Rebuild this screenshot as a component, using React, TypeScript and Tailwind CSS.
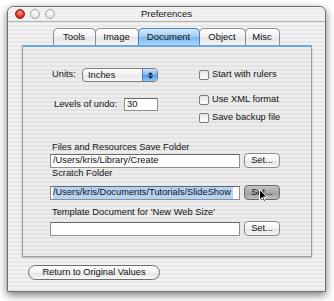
const stripes =
  'bg-[repeating-linear-gradient(180deg,#f3f3f3_0px,#f3f3f3_2px,#e7e7e7_2px,#e7e7e7_4px)]'

function Tab({ label, width, active }: { label: string; width: string; active?: boolean }) {
  return (
    <div
      className={`${width} h-[17px] -ml-px first:ml-0 flex items-center justify-center rounded-t-[5px] border border-b-0 ${
        active
          ? 'border-[#4a7fbf] bg-[linear-gradient(180deg,#d8ecfd_0%,#9ccbf3_50%,#7ab8ee_51%,#a9d6fb_100%)] z-10'
          : 'border-[#8c8c8c] bg-[linear-gradient(180deg,#ffffff_0%,#f1f1f1_50%,#e4e4e4_51%,#f4f4f4_100%)]'
      }`}
    >
      {label}
    </div>
  )
}

function Checkbox({ label }: { label: string }) {
  return (
    <div className="flex items-center h-[14px]">
      <div className="w-[10px] h-[10px] rounded-[2px] border border-[#7d7d7d] bg-[linear-gradient(180deg,#e6e6e6,#ffffff)] mr-[3px]" />
      <span>{label}</span>
    </div>
  )
}

function SetButton({ pressed }: { pressed?: boolean }) {
  return (
    <div
      className={`relative w-[36px] h-[15px] rounded-[4px] border flex items-center justify-center ${
        pressed
          ? 'border-[#6a6a6a] bg-[linear-gradient(180deg,#c4c4c4_0%,#a9a9a9_50%,#9c9c9c_51%,#bdbdbd_100%)]'
          : 'border-[#8a8a8a] bg-[linear-gradient(180deg,#ffffff_0%,#f2f2f2_50%,#e2e2e2_51%,#f6f6f6_100%)]'
      }`}
    >
      Set...
      {pressed && (
        <svg className="absolute left-[14px] top-[3px]" width="9" height="14" viewBox="0 0 9 14">
          <path d="M0.5 0.5 L0.5 11 L3 8.5 L5 13 L6.5 12.3 L4.6 8 L8 8 Z" fill="#000" stroke="#fff" strokeWidth="1" />
        </svg>
      )}
    </div>
  )
}

function TextField({ children, selected }: { children?: React.ReactNode; selected?: boolean }) {
  return (
    <div className="w-[190px] h-[14px] border border-[#8e8e8e] border-t-[#6a6a6a] bg-white overflow-hidden flex items-center px-[2px] whitespace-nowrap">
      {selected ? <span className="bg-[#b6d3f5] pr-[2px]">{children}</span> : children}
    </div>
  )
}

export default function App() {
  return (
    <div
      className="w-[334px] h-[301px] bg-white pt-[6px] pl-[7px] text-[9.3px] text-[#111]"
      style={{ fontFamily: '"Liberation Sans", Arial, sans-serif' }}
    >
      <div className={`w-[319px] h-[286px] border border-[#6f6f6f] rounded-t-[6px] shadow-[0_3px_8px_rgba(0,0,0,0.55)] flex flex-col ${stripes}`}>
        {/* Title bar */}
        <div className="relative h-[15px] flex items-center justify-center border-b border-[#b4b4b4] bg-[repeating-linear-gradient(180deg,#f7f7f7_0px,#f7f7f7_1px,#e9e9e9_1px,#e9e9e9_2px)] rounded-t-[6px]">
          <div className="absolute left-[7px] top-[2px] flex gap-[5px]">
            <div className="w-[10px] h-[10px] rounded-full border border-[#8b1a12] bg-[radial-gradient(circle_at_50%_35%,#ff9d8c_0%,#e0392a_55%,#a5170c_100%)]" />
            <div className="w-[10px] h-[10px] rounded-full border border-[#a8a8a8] bg-[radial-gradient(circle_at_50%_35%,#ffffff_0%,#e6e6e6_60%,#c9c9c9_100%)]" />
            <div className="w-[10px] h-[10px] rounded-full border border-[#a8a8a8] bg-[radial-gradient(circle_at_50%_35%,#ffffff_0%,#e6e6e6_60%,#c9c9c9_100%)]" />
          </div>
          <span className="text-[9.5px]">Preferences</span>
        </div>

        {/* Tabs */}
        <div className="flex justify-center mt-[6px] ml-[-1px] text-[9.5px]">
          <Tab label="Tools" width="w-[43px]" />
          <Tab label="Image" width="w-[44px]" />
          <Tab label="Document" width="w-[62px]" active />
          <Tab label="Object" width="w-[47px]" />
          <Tab label="Misc" width="w-[35px]" />
        </div>

        {/* Panel */}
        <div className="ml-[14px] w-[290px] h-[212px] border border-[#9a9a9a] border-t-2 border-t-[#6aa8e8] bg-[repeating-linear-gradient(180deg,#ededed_0px,#ededed_2px,#e3e3e3_2px,#e3e3e3_4px)] shadow-[0_1px_2px_rgba(0,0,0,0.2)] pl-[27px] pt-[21px]">
          <div className="flex">
            <div className="w-[149px]">
              <div className="flex items-center h-[14px]">
                <span className="w-[32px] pl-[2px]">Units:</span>
                <div className="w-[76px] h-[14px] rounded-[4px] border border-[#7d7d7d] flex overflow-hidden bg-[linear-gradient(180deg,#ffffff_0%,#f3f3f3_50%,#e6e6e6_51%,#fafafa_100%)]">
                  <span className="flex-1 pl-[5px] leading-[12px]">Inches</span>
                  <div className="w-[15px] border-l border-[#4a7fbf] bg-[linear-gradient(180deg,#c6e2fb_0%,#7bb7ef_50%,#4f9be6_51%,#8cc6f7_100%)] flex flex-col items-center justify-center gap-[1px]">
                    <svg width="5" height="3" viewBox="0 0 5 3"><path d="M0 3 L2.5 0 L5 3 Z" fill="#1b2a3a" /></svg>
                    <svg width="5" height="3" viewBox="0 0 5 3"><path d="M0 0 L2.5 3 L5 0 Z" fill="#1b2a3a" /></svg>
                  </div>
                </div>
              </div>
              <div className="flex items-center h-[13px] mt-[16px]">
                <span className="w-[74px] pl-[4px]">Levels of undo:</span>
                <div className="w-[34px] h-[13px] border border-[#8e8e8e] border-t-[#6a6a6a] bg-white pl-[2px] leading-[11px]">30</div>
              </div>
            </div>
            <div>
              <Checkbox label="Start with rulers" />
              <div className="mt-[11px]">
                <Checkbox label="Use XML format" />
              </div>
              <div className="mt-[4px]">
                <Checkbox label="Save backup file" />
              </div>
            </div>
          </div>

          <div className="mt-[16px]">
            <div className="h-[12px] leading-[12px] pl-[2px]">Files and Resources Save Folder</div>
            <div className="flex items-center gap-[4px] h-[15px]">
              <TextField>/Users/kris/Library/Create</TextField>
              <SetButton />
            </div>
            <div className="h-[10px] leading-[10px] pl-[2px]">Scratch Folder</div>
            <div className="flex items-center gap-[4px] h-[15px] mt-[7px]">
              <TextField selected>/Users/kris/Documents/Tutorials/SlideShow</TextField>
              <SetButton pressed />
            </div>
            <div className="h-[12px] leading-[12px] pl-[2px] mt-[6px]">Template Document for 'New Web Size'</div>
            <div className="flex items-center gap-[4px] h-[15px] mt-[3px]">
              <TextField />
              <SetButton />
            </div>
          </div>
        </div>

        {/* Bottom button */}
        <div className="mt-[8px] ml-[20px] w-[132px] h-[15px] rounded-full border border-[#6d6d6d] bg-[linear-gradient(180deg,#ffffff_0%,#f2f2f2_50%,#e2e2e2_51%,#f8f8f8_100%)] flex items-center justify-center">
          Return to Original Values
        </div>
      </div>
    </div>
  )
}
